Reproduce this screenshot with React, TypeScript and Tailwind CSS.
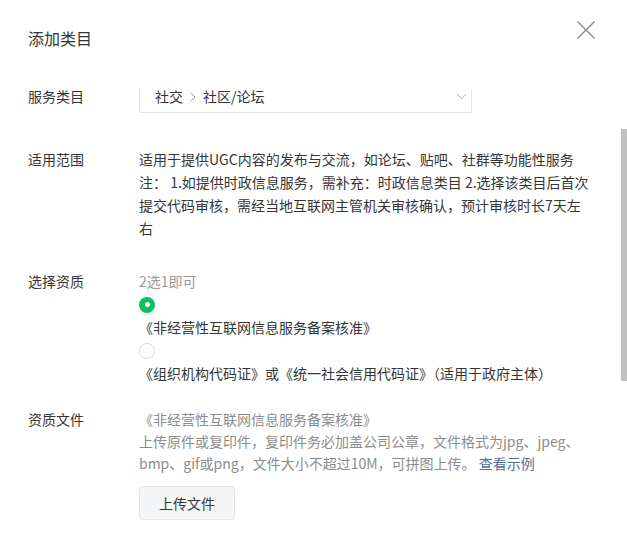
import React from "react";

const font = "font-['Noto_Sans_CJK_SC','Noto_Sans',sans-serif]";

function Radio({ checked }: { checked: boolean }) {
  return checked ? (
    <span className="flex h-[16px] w-[16px] items-center justify-center rounded-full bg-[#07c160]">
      <span className="h-[5px] w-[5px] rounded-full bg-white" />
    </span>
  ) : (
    <span className="h-[16px] w-[16px] rounded-full border border-[#dcdcdc] bg-white" />
  );
}

export default function App() {
  return (
    <div className={`relative h-[534px] w-[627px] overflow-hidden bg-white text-[14px] text-[#353535] ${font}`}>
      {/* header */}
      <div className="flex h-[90px] items-start px-[28px] pt-[27px]">
        <h2 className="text-[16px] leading-[22px] font-normal text-[#353535]">添加类目</h2>
      </div>
      <button className="absolute left-[577px] top-[21px] h-[18px] w-[18px]" aria-label="close">
        <svg width="18" height="18" viewBox="0 0 18 18" fill="none" stroke="#8a8a8a" strokeWidth="1.4">
          <path d="M0.5 0.5 L17.5 17.5 M17.5 0.5 L0.5 17.5" />
        </svg>
      </button>

      {/* content (scrolled) */}
      <div className="relative h-[444px] overflow-hidden">
        <div className="-mt-[13px] flex flex-col">
          {/* row 1 */}
          <div className="flex h-[36px] items-center">
            <div className="w-[139px] pl-[28px] pt-[3px] leading-[23px]">服务类目</div>
            <div className="flex h-[36px] w-[333px] items-center justify-between border border-[#e5e5e5] pl-[15px] pr-[4px] pt-[3px]">
              <span className="flex items-center leading-[23px]">
                社交
                <svg className="mx-[7px]" width="6" height="10" viewBox="0 0 6 10" fill="none" stroke="#9a9a9a" strokeWidth="1">
                  <path d="M0.8 0.8 L5 5 L0.8 9.2" />
                </svg>
                社区/论坛
              </span>
              <svg width="11" height="7" viewBox="0 0 11 7" fill="none" stroke="#a8a8a8" strokeWidth="1">
                <path d="M0.5 0.8 L5.5 5.8 L10.5 0.8" />
              </svg>
            </div>
          </div>

          {/* row 2 */}
          <div className="mt-[35px] flex leading-[23px]">
            <div className="w-[139px] shrink-0 pl-[28px]">适用范围</div>
            <div className="flex flex-col whitespace-nowrap">
              <span>适用于提供UGC内容的发布与交流，如论坛、贴吧、社群等功能性服务</span>
              <span>注： 1.如提供时政信息服务，需补充：时政信息类目 2.选择该类目后首次</span>
              <span>提交代码审核，需经当地互联网主管机关审核确认，预计审核时长7天左</span>
              <span>右</span>
            </div>
          </div>

          {/* row 3 */}
          <div className="mt-[30px] flex leading-[23px]">
            <div className="w-[139px] shrink-0 pl-[28px]">选择资质</div>
            <div className="flex flex-col whitespace-nowrap">
              <span className="text-[#9a9a9a]">2选1即可</span>
              <div className="flex h-[23px] items-center">
                <Radio checked />
              </div>
              <span>《非经营性互联网信息服务备案核准》</span>
              <div className="flex h-[23px] items-center">
                <Radio checked={false} />
              </div>
              <span>《组织机构代码证》或《统一社会信用代码证》（适用于政府主体）</span>
            </div>
          </div>

          {/* row 4 */}
          <div className="mt-[23px] flex leading-[22px]">
            <div className="w-[139px] shrink-0 pl-[28px]">资质文件</div>
            <div className="flex flex-col whitespace-nowrap text-[#8c8c8c]">
              <span>《非经营性互联网信息服务备案核准》</span>
              <span>上传原件或复印件，复印件务必加盖公司公章，文件格式为jpg、jpeg、</span>
              <span>
                bmp、gif或png，文件大小不超过10M，可拼图上传。 <span className="text-[#576b95]">查看示例</span>
              </span>
              <div className="mt-[12px]">
                <button className="flex h-[34px] w-[96px] items-center justify-center rounded-[4px] border border-[#e3e4e6] bg-[#f4f5f7] text-[14px] text-[#353535]">
                  上传文件
                </button>
              </div>
            </div>
          </div>
        </div>

        {/* scrollbar thumb */}
        <div className="absolute right-0 top-[39px] h-[252px] w-[6px] bg-[#c1c1c1]" />
      </div>
    </div>
  );
}
